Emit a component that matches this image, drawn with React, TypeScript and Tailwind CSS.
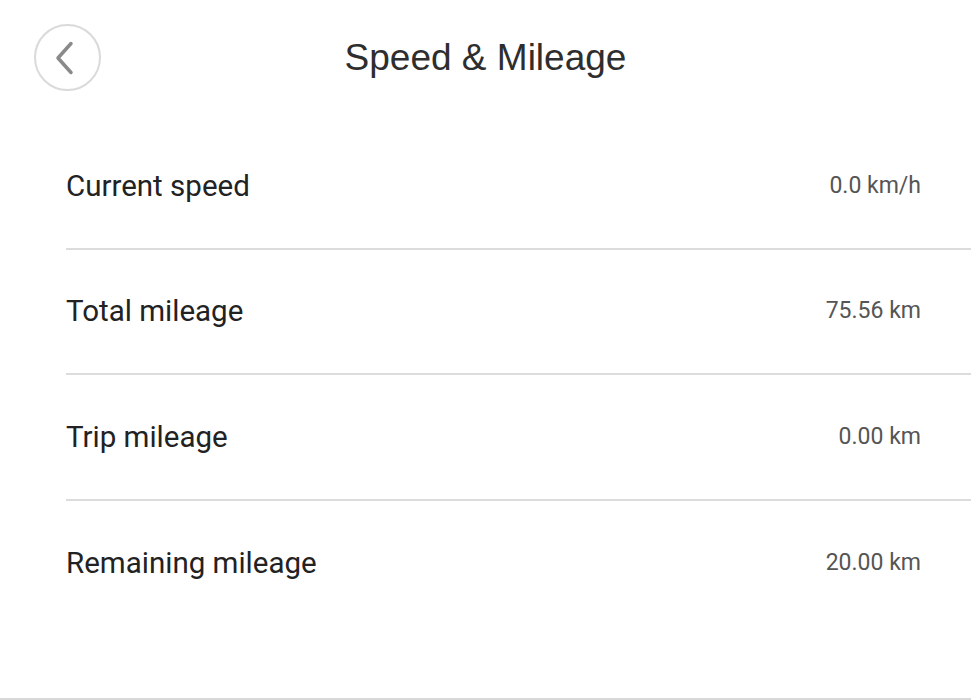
import React from "react";

const rows = [
  { label: "Current speed", value: "0.0 km/h" },
  { label: "Total mileage", value: "75.56 km" },
  { label: "Trip mileage", value: "0.00 km" },
  { label: "Remaining mileage", value: "20.00 km" },
];

export default function App() {
  return (
    <div className="w-[971px] h-[700px] bg-white flex flex-col overflow-hidden" style={{ fontFamily: "Roboto, 'Liberation Sans', sans-serif" }}>
      <div className="relative h-[114px] flex items-center justify-center shrink-0">
        <button className="absolute left-[34px] top-[24px] w-[67px] h-[67px] rounded-full border-2 border-[#dadada] flex items-center justify-center">
          <svg width="32" height="36" viewBox="0 0 32 36" fill="none" className="-ml-[6px]">
            <path d="M22 3.5 L9 18 L22 32.5" stroke="#8a8a8a" strokeWidth="3.5" strokeLinecap="round" strokeLinejoin="round" />
          </svg>
        </button>
        <h1 className="text-[37px] text-[#2e2e2e] leading-none" style={{ fontFamily: "'Liberation Sans', Arial, sans-serif" }}>Speed &amp; Mileage</h1>
      </div>
      <div className="flex-1 flex flex-col pl-[66px] pt-[10px]">
        {rows.map((r, i) => (
          <div key={r.label} className={`h-[125.5px] flex items-center justify-between pr-[50px] ${i < rows.length - 1 ? "border-b-2 border-[#dcdcdc]" : ""}`}>
            <span className="text-[29.5px] text-[#222]">{r.label}</span>
            <span className="text-[23px] text-[#555]">{r.value}</span>
          </div>
        ))}
      </div>
      <div className="h-[2px] bg-[#d8d8d8] shrink-0" />
    </div>
  );
}
